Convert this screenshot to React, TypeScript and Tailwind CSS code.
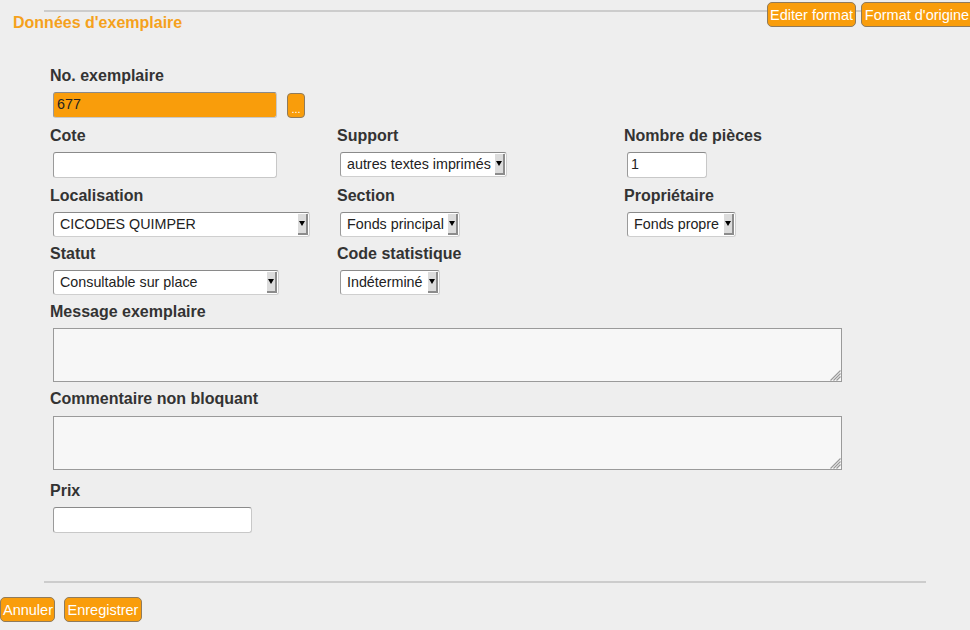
import React from "react";

const font = { fontFamily: '"Liberation Sans", Arial, sans-serif' };

function OrangeButton({ children, className = "" }: { children: React.ReactNode; className?: string }) {
  return (
    <button
      className={
        "h-[25px] px-[2px] rounded-[5px] border border-[#8f7b5c] bg-[#f99d0b] text-white text-[14.5px] leading-[22px] " +
        className
      }
    >
      {children}
    </button>
  );
}

function Label({ children }: { children: React.ReactNode }) {
  return <div className="h-[18px] leading-[18px] text-[16px] font-bold text-[#333]">{children}</div>;
}

function TextInput({ w, value = "", orange = false }: { w: string; value?: string; orange?: boolean }) {
  return (
    <div
      className={
        "h-[26px] rounded-[3px] border border-[#c8c8c8] border-t-[#8a8a8a] border-l-[#9a9a9a] flex items-center pl-[3px] text-[14.3px] text-[#222] " +
        (orange ? "bg-[#f99d0b] " : "bg-white ") +
        w
      }
    >
      {value}
    </div>
  );
}

function Select({ w, value }: { w: string; value: string }) {
  return (
    <div
      className={
        "h-[25px] rounded-[3px] border border-[#cfcfcf] border-t-[#8a8a8a] border-l-[#9a9a9a] bg-white flex items-stretch text-[14.3px] text-[#222] " +
        w
      }
    >
      <div className="flex-1 flex items-center pl-[6px] whitespace-nowrap overflow-hidden">{value}</div>
      <div className="w-[10px] my-[1px] mr-[1px] bg-[#dcdcdc] border-r-[2px] border-b-[2px] border-[#8c8c8c] flex items-center justify-center">
        <div className="w-0 h-0 border-l-[3.5px] border-r-[3.5px] border-t-[5px] border-l-transparent border-r-transparent border-t-black" />
      </div>
    </div>
  );
}

function TextArea() {
  return (
    <div className="relative w-[789px] h-[54px] border border-[#9a9a9a] bg-[#f7f7f7]">
      <svg className="absolute right-0 bottom-0" width="13" height="13" viewBox="0 0 13 13">
        <path d="M12.5 2.5 L2.5 12.5 M12.5 5.5 L5.5 12.5 M12.5 8.5 L8.5 12.5" stroke="#9a9a9a" strokeWidth="1.2" />
      </svg>
    </div>
  );
}

function Field({ label, children }: { label: string; children: React.ReactNode }) {
  return (
    <div>
      <Label>{label}</Label>
      <div className="mt-[7px] pl-[3px]">{children}</div>
    </div>
  );
}

export default function App() {
  return (
    <div className="w-[970px] h-[630px] bg-[#eeeeee] relative overflow-hidden" style={font}>
      {/* header */}
      <div className="pt-[10px]">
        <div className="ml-[44px] h-[2px] bg-[#cccccc]" />
        <h2 className="ml-[13px] mt-[2px] h-[18px] leading-[18px] text-[16px] font-bold text-[#f5a11c]">
          Données d'exemplaire
        </h2>
      </div>
      <div className="absolute top-[2px] left-[767px] flex gap-[5px] whitespace-nowrap">
        <OrangeButton className="w-[89px]">Editer format</OrangeButton>
        <OrangeButton className="w-[112px] rounded-r-none">Format d'origine</OrangeButton>
      </div>

      {/* form */}
      <div className="ml-[50px] mt-[35px]">
        <div className="h-[60px]">
          <Label>No. exemplaire</Label>
          <div className="mt-[7px] pl-[3px] flex items-center gap-[10px]">
            <TextInput w="w-[224px]" value="677" orange />
            <button className="w-[18px] h-[25px] rounded-[4px] border border-[#8f7b5c] bg-[#f99d0b] text-white text-[11px] leading-[30px] flex justify-center">
              ...
            </button>
          </div>
        </div>

        <div className="grid grid-cols-[287px_287px_287px] h-[60px]">
          <Field label="Cote">
            <TextInput w="w-[224px]" />
          </Field>
          <Field label="Support">
            <Select w="w-[167px] h-[24px]" value="autres textes imprimés" />
          </Field>
          <Field label="Nombre de pièces">
            <TextInput w="w-[80px]" value="1" />
          </Field>
        </div>

        <div className="grid grid-cols-[287px_287px_287px] h-[58px]">
          <Field label="Localisation">
            <Select w="w-[257px]" value="CICODES QUIMPER" />
          </Field>
          <Field label="Section">
            <Select w="w-[120px]" value="Fonds principal" />
          </Field>
          <Field label="Propriétaire">
            <Select w="w-[109px]" value="Fonds propre" />
          </Field>
        </div>

        <div className="grid grid-cols-[287px_287px_287px] h-[58px]">
          <Field label="Statut">
            <Select w="w-[226px]" value="Consultable sur place" />
          </Field>
          <Field label="Code statistique">
            <Select w="w-[100px]" value="Indéterminé" />
          </Field>
          <div />
        </div>

        <div className="h-[87px]">
          <Field label="Message exemplaire">
            <TextArea />
          </Field>
        </div>

        <div className="h-[92px]">
          <Label>Commentaire non bloquant</Label>
          <div className="mt-[8px] pl-[3px]">
            <TextArea />
          </div>
        </div>

        <Field label="Prix">
          <TextInput w="w-[199px]" />
        </Field>
      </div>

      <div className="ml-[44px] mt-[48px] w-[882px] h-[2px] bg-[#cccccc]" />

      <div className="mt-[14px] flex gap-[9px] whitespace-nowrap">
        <OrangeButton className="w-[55px]">Annuler</OrangeButton>
        <OrangeButton className="w-[78px]">Enregistrer</OrangeButton>
      </div>
    </div>
  );
}
